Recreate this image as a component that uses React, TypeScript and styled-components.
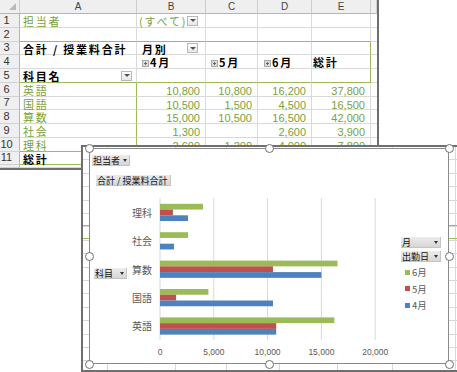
import React from "react";
import styled, { createGlobalStyle } from "styled-components";

const GREEN_TEXT = "#77a23b";
const GREEN_LINE = "#9bbb59";
const GRID = "#dadada";
const BLUE = "#4f81bd";
const RED = "#c0504d";
const GREEN = "#9bbb59";

const GlobalStyle = createGlobalStyle`
  html, body { margin: 0; padding: 0; background: #fff; }
  body {
    width: 457px; height: 372px; overflow: hidden;
    font-family: "Noto Sans CJK JP", "Liberation Sans", sans-serif;
  }
`;

const Stage = styled.div`
  position: relative;
  width: 457px;
  height: 372px;
  overflow: hidden;
  background: #fff;
`;

/* ---------- Spreadsheet window ---------- */

const Sheet = styled.div`
  box-sizing: border-box;
  width: 379px;
  height: 170px;
  border-right: 2px solid #6f6f6f;
  border-bottom: 2px solid #6f6f6f;
  display: grid;
  grid-template-columns: 20px 117px 69px 52px 54px 59px 6px;
  grid-template-rows: 14px repeat(11, 13.75px) 1fr;
  overflow: hidden;
  background: #fff;
`;

const ColHead = styled.div<{ $corner?: boolean }>`
  box-sizing: border-box;
  background: #efefef;
  border-right: 1px solid #cdcdcd;
  border-bottom: 1px solid #b5b5b5;
  display: flex;
  align-items: ${(p) => (p.$corner ? "flex-end" : "center")};
  justify-content: ${(p) => (p.$corner ? "flex-end" : "center")};
  padding: ${(p) => (p.$corner ? "0 3px 3px 0" : "0")};
  font: 10px/1 "Liberation Sans", sans-serif;
  color: #444;
`;

const CornerTriangle = styled.span`
  width: 0;
  height: 0;
  border-left: 7px solid transparent;
  border-bottom: 7px solid #b9b9b9;
`;

const RowHead = styled.div`
  box-sizing: border-box;
  background: #efefef;
  border-right: 1px solid #b5b5b5;
  border-bottom: 1px solid #d2d2d2;
  display: flex;
  align-items: center;
  justify-content: center;
  padding-right: 6px;
  font: 11px/1 "Liberation Sans", sans-serif;
  color: #333;
`;

const Cell = styled.div<{
  $right?: boolean;
  $gR?: boolean;
  $gB?: boolean;
  $pl?: number;
}>`
  box-sizing: border-box;
  min-width: 0;
  border-right: 1px solid ${(p) => (p.$gR ? GREEN_LINE : GRID)};
  border-bottom: 1px solid ${(p) => (p.$gB ? GREEN_LINE : GRID)};
  display: flex;
  align-items: flex-start;
  justify-content: ${(p) => (p.$right ? "flex-end" : "flex-start")};
  padding: 1px 5px 0 ${(p) => (p.$pl ?? 3)}px;
  white-space: nowrap;
  overflow: visible;
`;

const CjkText = styled.span<{ $green?: boolean; $bold?: boolean }>`
  font-family: "Noto Sans CJK JP", sans-serif;
  font-size: 11px;
  line-height: 11px;
  padding-top: 1px;
  letter-spacing: 1.8px;
  font-weight: ${(p) => (p.$bold ? 700 : 400)};
  color: ${(p) => (p.$green ? GREEN_TEXT : "#000")};
`;

const NumText = styled.span<{ $green?: boolean; $bold?: boolean }>`
  font-family: "Liberation Sans", sans-serif;
  font-size: 11px;
  line-height: 11px;
  padding-top: 2px;
  font-weight: ${(p) => (p.$bold ? 700 : 400)};
  color: ${(p) => (p.$green ? GREEN_TEXT : "#000")};
`;

const DropBox = styled.span<{ $mr?: number }>`
  box-sizing: border-box;
  margin-left: auto;
  margin-right: ${(p) => p.$mr ?? 0}px;
  align-self: center;
  width: 11px;
  height: 10px;
  border: 1px solid #b8b8b8;
  background: linear-gradient(#ffffff, #e6e6e6);
  display: flex;
  align-items: center;
  justify-content: center;
  flex-shrink: 0;
  &::after {
    content: "";
    border-left: 3px solid transparent;
    border-right: 3px solid transparent;
    border-top: 3px solid #555;
  }
`;

const ExpandIcon = () => (
  <svg width="7" height="7" viewBox="0 0 7 7" style={{ marginTop: 4, marginRight: 1, flexShrink: 0 }}>
    <rect x="0.5" y="0.5" width="6" height="6" fill="#dcdcdc" stroke="#a9a9a9" />
    <path d="M2 3.5h3M3.5 2v3" stroke="#666" strokeWidth="1" />
  </svg>
);

type Spec = {
  t?: string;
  num?: boolean;
  g?: boolean;
  b?: boolean;
  drop?: boolean;
  mr?: number;
  exp?: boolean;
  gR?: boolean;
  gB?: boolean;
  pl?: number;
};

const subjects: [string, string[]][] = [
  ["英語", ["10,800", "10,800", "16,200", "37,800"]],
  ["国語", ["10,500", "1,500", "4,500", "16,500"]],
  ["算数", ["15,000", "10,500", "16,500", "42,000"]],
  ["社会", ["1,300", "", "2,600", "3,900"]],
  ["理科", ["2,600", "1,200", "4,000", "7,800"]],
];

const rows: Spec[][] = [
  [{ t: "担当者", g: true }, { t: "(すべて)", g: true, drop: true, mr: 2, pl: 2 }, {}, {}, {}, {}],
  [{ gB: true }, { gB: true }, { gB: true }, { gB: true }, { gB: true }, {}],
  [{ t: "合計 / 授業料合計", b: true }, { t: "月別", b: true, drop: true, mr: 2, pl: 5 }, {}, {}, { gR: true }, {}],
  [
    {},
    { t: "4月", b: true, exp: true, pl: 5 },
    { t: "5月", b: true, exp: true, pl: 5 },
    { t: "6月", b: true, exp: true, pl: 6 },
    { t: "総計", b: true, gR: true, pl: 1 },
    {},
  ],
  [{ t: "科目名", b: true, drop: true, mr: -1, gB: true }, { gB: true }, { gB: true }, { gB: true }, { gB: true, gR: true }, {}],
  ...subjects.map(([name, vals], i) => [
    { t: name, g: true, gR: true, gB: i === subjects.length - 1 } as Spec,
    ...vals.map((v) => ({ t: v, num: true, g: true, gB: i === subjects.length - 1 } as Spec)),
    {} as Spec,
  ]),
  [
    { t: "総計", b: true, gR: true, gB: true },
    { t: "40,200", num: true, b: true },
    { t: "24,000", num: true, b: true },
    { t: "43,800", num: true, b: true },
    { t: "108,000", num: true, b: true },
    {},
  ],
  [{}, {}, {}, {}, {}, {}],
];

const cols = ["A", "B", "C", "D", "E", ""];

const SheetView = () => (
  <Sheet>
    <ColHead $corner>
      <CornerTriangle />
    </ColHead>
    {cols.map((c, i) => (
      <ColHead key={i}>{c}</ColHead>
    ))}
    {rows.map((row, r) => (
      <React.Fragment key={r}>
        <RowHead>{r < 11 ? r + 1 : ""}</RowHead>
        {row.map((s, c) => (
          <Cell key={c} $right={s.num} $gR={s.gR} $gB={s.gB} $pl={s.pl}>
            {s.exp && <ExpandIcon />}
            {s.t &&
              (s.num ? (
                <NumText $green={s.g} $bold={s.b}>
                  {s.t}
                </NumText>
              ) : (
                <CjkText $green={s.g} $bold={s.b}>
                  {s.t}
                </CjkText>
              ))}
            {s.drop && <DropBox $mr={s.mr} />}
          </Cell>
        ))}
      </React.Fragment>
    ))}
  </Sheet>
);

/* ---------- Chart window ---------- */

const vLines = [24, 92, 143, 196, 254, 309, 372];

const ChartWindow = styled.div`
  position: absolute;
  left: 81px;
  top: 145px;
  width: 390px;
  height: 227px;
  box-sizing: border-box;
  border: 2px solid #6f6f6f;
  border-right: none;
  padding: 1px 0 0 6px;
  background-color: #fff;
  background-image:
    linear-gradient(${GREEN_LINE}, ${GREEN_LINE}),
    linear-gradient(${GREEN_LINE}, ${GREEN_LINE}),
    ${vLines.map(() => `linear-gradient(#d8d8d8, #d8d8d8)`).join(",")},
    repeating-linear-gradient(to bottom, transparent 0 12.4px, #d8d8d8 12.4px 13.4px);
  background-repeat: no-repeat, no-repeat, ${vLines.map(() => "no-repeat").join(",")}, repeat;
  background-size: 100% 1px, 100% 1px, ${vLines.map(() => "1px 100%").join(",")}, 100% 100%;
  background-position: 0 78px, 0 91px, ${vLines.map((x) => `${x}px 0`).join(",")}, 0 0;
`;

const ChartArea = styled.div`
  position: relative;
  box-sizing: border-box;
  width: 360px;
  height: 216px;
  border: 1px solid #8a8a8a;
  background: #fff;
  display: flex;
  flex-direction: column;
  align-items: flex-start;
`;

const Handle = styled.span<{ $h: "l" | "c" | "r"; $v: "t" | "m" | "b" }>`
  position: absolute;
  box-sizing: border-box;
  width: 9px;
  height: 9px;
  border-radius: 50%;
  border: 1px solid #707070;
  background: #fff;
  left: ${(p) => (p.$h === "l" ? "-5.5px" : p.$h === "c" ? "calc(50% - 4.5px)" : "calc(100% - 3.5px)")};
  top: ${(p) => (p.$v === "t" ? "-5.5px" : p.$v === "m" ? "calc(50% - 4.5px)" : "calc(100% - 3.5px)")};
`;

const PivotButton = styled.div<{ $w?: number; $ml?: number; $mt?: number }>`
  box-sizing: border-box;
  display: inline-flex;
  align-items: center;
  justify-content: space-between;
  gap: 3px;
  height: 11px;
  ${(p) => (p.$w ? `width: ${p.$w}px;` : "")}
  margin-left: ${(p) => p.$ml ?? 0}px;
  margin-top: ${(p) => p.$mt ?? 0}px;
  padding: 0 3px 0 1px;
  background: linear-gradient(#ececec, #d4d4d4);
  box-shadow: inset -1px -1px 0 #c4c4c4;
  font-family: "Noto Sans CJK JP", sans-serif;
  font-size: 9px;
  line-height: 11px;
  color: #111;
  white-space: nowrap;
  flex-shrink: 0;
`;

const Caret = styled.span`
  width: 0;
  height: 0;
  border-left: 2.5px solid transparent;
  border-right: 2.5px solid transparent;
  border-top: 3px solid #333;
`;

const ChartBody = styled.div`
  margin-top: 4px;
  align-self: stretch;
  flex: 1;
  display: grid;
  grid-template-columns: 37px 270px 1fr;
`;

const AxisFieldCol = styled.div`
  display: flex;
  flex-direction: column;
  align-items: flex-start;
`;

const Legend = styled.div`
  display: flex;
  flex-direction: column;
  align-items: flex-start;
  padding: 47px 0 0 4px;
`;

const LegendList = styled.div`
  margin-top: 2px;
  display: flex;
  flex-direction: column;
`;

const LegendItem = styled.div`
  height: 16.5px;
  display: flex;
  align-items: center;
  padding-left: 4px;
  font-family: "Noto Sans CJK JP", sans-serif;
  font-size: 9.5px;
  color: #595959;
`;

const Swatch = styled.span<{ $c: string }>`
  width: 5px;
  height: 5px;
  background: ${(p) => p.$c};
  margin-right: 2px;
`;

const cats: { name: string; v: number[] }[] = [
  { name: "理科", v: [2600, 1200, 4000] },
  { name: "社会", v: [1300, 0, 2600] },
  { name: "算数", v: [15000, 10500, 16500] },
  { name: "国語", v: [10500, 1500, 4500] },
  { name: "英語", v: [10800, 10800, 16200] },
];

const X0 = 33;
const STEP = 53.8;
const SCALE = STEP / 5000;
const TOP = 8;
const BAND = 28.4;
const BAR = 5.75;
const OFF = 5.8;

const PlotSvg = () => (
  <svg width="270" height="173" viewBox="0 0 270 173">
    {[0, 1, 2, 3, 4].map((k) => (
      <line
        key={k}
        x1={X0 + k * STEP}
        x2={X0 + k * STEP}
        y1={TOP}
        y2={TOP + BAND * 5}
        stroke="#d9d9d9"
        strokeWidth="1"
      />
    ))}
    {cats.map((c, i) => {
      const y = TOP + i * BAND;
      const series = [
        { v: c.v[2], col: GREEN },
        { v: c.v[1], col: RED },
        { v: c.v[0], col: BLUE },
      ];
      return (
        <g key={c.name}>
          {series.map((s, j) =>
            s.v > 0 ? (
              <rect key={j} x={X0} y={y + OFF + j * BAR} width={s.v * SCALE} height={BAR} fill={s.col} />
            ) : null
          )}
          <text
            x={25}
            y={y + BAND / 2}
            textAnchor="end"
            dominantBaseline="central"
            fontFamily='"Noto Sans CJK JP", sans-serif'
            fontSize="10"
            fill="#595959"
          >
            {c.name}
          </text>
        </g>
      );
    })}
    {["0", "5,000", "10,000", "15,000", "20,000"].map((l, k) => (
      <text
        key={l}
        x={X0 + k * STEP}
        y={161.5}
        textAnchor="middle"
        dominantBaseline="central"
        fontFamily='"Liberation Sans", sans-serif'
        fontSize="8.5"
        fill="#595959"
      >
        {l}
      </text>
    ))}
  </svg>
);

const ChartView = () => (
  <ChartWindow>
    <ChartArea>
      <PivotButton $ml={2} $mt={6}>
        担当者
        <Caret />
      </PivotButton>
      <PivotButton $ml={6} $mt={9}>
        合計 / 授業料合計
      </PivotButton>
      <ChartBody>
        <AxisFieldCol>
          <PivotButton $ml={4} $mt={78} $w={33}>
            科目
            <Caret />
          </PivotButton>
        </AxisFieldCol>
        <PlotSvg />
        <Legend>
          <PivotButton $w={40}>
            月
            <Caret />
          </PivotButton>
          <PivotButton $w={40} $mt={3}>
            出勤日
            <Caret />
          </PivotButton>
          <LegendList>
            <LegendItem>
              <Swatch $c={GREEN} />
              6月
            </LegendItem>
            <LegendItem>
              <Swatch $c={RED} />
              5月
            </LegendItem>
            <LegendItem>
              <Swatch $c={BLUE} />
              4月
            </LegendItem>
          </LegendList>
        </Legend>
      </ChartBody>
      <Handle $h="l" $v="t" />
      <Handle $h="c" $v="t" />
      <Handle $h="r" $v="t" />
      <Handle $h="l" $v="m" />
      <Handle $h="r" $v="m" />
      <Handle $h="l" $v="b" />
      <Handle $h="c" $v="b" />
      <Handle $h="r" $v="b" />
    </ChartArea>
  </ChartWindow>
);

export default function App() {
  return (
    <>
      <GlobalStyle />
      <Stage>
        <SheetView />
        <ChartView />
      </Stage>
    </>
  );
}
